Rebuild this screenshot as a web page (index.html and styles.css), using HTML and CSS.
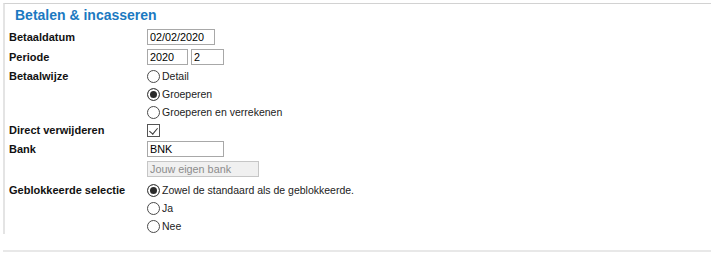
FILE: index.html
```html
<!DOCTYPE html>
<html lang="nl">
<head>
    <meta charset="UTF-8">
    <meta name="viewport" content="width=device-width, initial-scale=1.0">
    <title>Betalen &amp; incasseren</title>
    <link rel="stylesheet" href="styles.css">
</head>
<body>
    <div class="panel">
        <h1 class="title">Betalen &amp; incasseren</h1>

        <div class="form">
            <div class="row h21">
                <div class="label">Betaaldatum</div>
                <div class="value">
                    <div class="line"><input class="field w-date" type="text" value="02/02/2020"></div>
                </div>
            </div>

            <div class="row h20">
                <div class="label">Periode</div>
                <div class="value">
                    <div class="line">
                        <input class="field w-year" type="text" value="2020">
                        <input class="field w-period" type="text" value="2">
                    </div>
                </div>
            </div>

            <div class="row h18">
                <div class="label">Betaalwijze</div>
                <div class="value">
                    <label class="line option"><input class="radio" type="radio" name="wijze"> Detail</label>
                    <label class="line option"><input class="radio" type="radio" name="wijze" checked> Groeperen</label>
                    <label class="line option"><input class="radio" type="radio" name="wijze"> Groeperen en verrekenen</label>
                </div>
            </div>

            <div class="row h18">
                <div class="label">Direct verwijderen</div>
                <div class="value">
                    <div class="line"><input class="check" type="checkbox" checked></div>
                </div>
            </div>

            <div class="row h20">
                <div class="label">Bank</div>
                <div class="value">
                    <div class="line"><input class="field w-bank" type="text" value="BNK"></div>
                    <div class="line"><input class="field field-disabled w-bankname" type="text" value="Jouw eigen bank" disabled></div>
                </div>
            </div>

            <div class="row h18 row-spaced">
                <div class="label">Geblokkeerde selectie</div>
                <div class="value">
                    <label class="line option"><input class="radio" type="radio" name="blok" checked> Zowel de standaard als de geblokkeerde.</label>
                    <label class="line option"><input class="radio" type="radio" name="blok"> Ja</label>
                    <label class="line option"><input class="radio" type="radio" name="blok"> Nee</label>
                </div>
            </div>
        </div>
    </div>

    <div class="divider"></div>
</body>
</html>
```

FILE: styles.css
```css
* {
    margin: 0;
    padding: 0;
    box-sizing: border-box;
    font-family: 'Liberation Sans', Arial, sans-serif;
}

body {
    background: #fff;
    color: #111;
    width: 719px;
}

.panel {
    margin: 3px 8px 0 3px;
    border-top: 1px solid #d2d2d2;
    border-left: 2px solid #e4e4e4;
    padding: 1px 0 0 4px;
    height: 231px;
}

.title {
    height: 21px;
    line-height: 21px;
    padding-left: 6px;
    font-size: 14px;
    font-weight: bold;
    color: #1b79c1;
}

.row {
    display: flex;
    align-items: flex-start;
}

.h21 { --h: 21px; }
.h20 { --h: 20px; }
.h18 { --h: 18px; }

.row-spaced {
    margin-top: 2px;
}

.label {
    width: 138px;
    flex-shrink: 0;
    height: var(--h);
    display: flex;
    align-items: center;
    font-size: 11px;
    font-weight: bold;
    color: #111;
}

.value {
    display: flex;
    flex-direction: column;
}

.line {
    height: var(--h);
    display: flex;
    align-items: center;
    gap: 3px;
}

.field {
    height: 16px;
    border: 1px solid #a8a8a8;
    padding: 0 2px;
    font-size: 10.8px;
    color: #000;
    background: #fff;
    outline: none;
}

.field-disabled {
    background: #f0f0f0;
    border-color: #c6c6c6;
    color: #8c8c8c;
}

.w-date { width: 68px; }
.w-year { width: 41px; }
.w-period { width: 33px; }
.w-bank { width: 77px; }
.w-bankname { width: 112px; }

.option {
    font-size: 10.5px;
    color: #222;
    gap: 2px;
}

.radio {
    appearance: none;
    width: 13px;
    height: 13px;
    border: 1px solid #4a4a4a;
    border-radius: 50%;
    background: #fff;
    flex-shrink: 0;
}

.radio:checked {
    background: #2b2b2b;
    box-shadow: inset 0 0 0 2px #fff;
}

.check {
    appearance: none;
    position: relative;
    width: 13px;
    height: 13px;
    border: 1px solid #555;
    background: #fff;
}

.check:checked::after {
    content: '';
    position: absolute;
    left: 3px;
    top: 1px;
    width: 4px;
    height: 7px;
    border-right: 1px solid #333;
    border-bottom: 1px solid #333;
    transform: rotate(40deg);
}

.divider {
    margin: 16px 8px 0 3px;
    border-top: 2px solid #e8e8e8;
}
```
